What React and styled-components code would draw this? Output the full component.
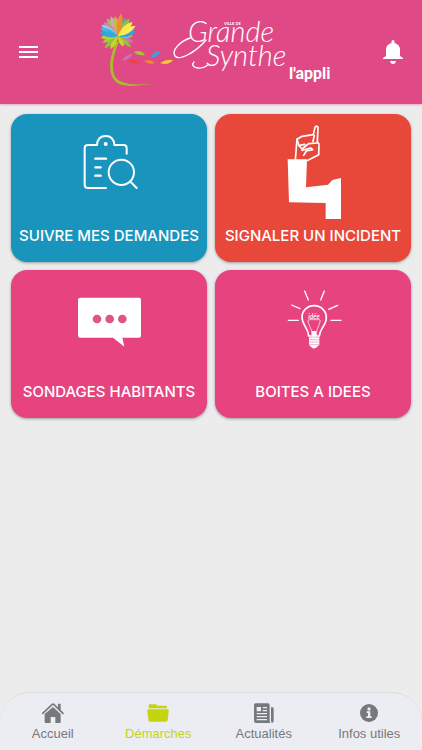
import React, { useState } from "react";
import styled, { createGlobalStyle } from "styled-components";

const pink = "#df4985";
const cardPink = "#e6437f";
const blue = "#1995bd";
const red = "#e8483a";
const lime = "#c3d50f";
const grey = "#77787c";
const sans = `"Liberation Sans", Arial, Helvetica, sans-serif`;

const GlobalStyle = createGlobalStyle`
  * { box-sizing: border-box; }
  body {
    margin: 0;
    background: #ececec;
    font-family: ${sans};
  }
`;

const Page = styled.div`
  min-height: 100vh;
  display: flex;
  flex-direction: column;
`;

const Header = styled.header`
  display: flex;
  align-items: center;
  justify-content: space-between;
  height: 104px;
  padding: 0 19px;
  background: ${pink};
  box-shadow: 0 1px 2px rgba(223, 73, 133, 0.4);
`;

const IconButton = styled.button`
  display: flex;
  padding: 0;
  border: 0;
  background: none;
  color: #fff;
  cursor: pointer;
`;

const LogoLink = styled.a`
  display: flex;
`;

const Main = styled.main`
  flex: 1;
  padding: 10px 11px;
`;

const Grid = styled.div`
  display: grid;
  grid-template-columns: 1fr 1fr;
  gap: 8px;
`;

const Card = styled.button`
  display: flex;
  flex-direction: column;
  align-items: center;
  gap: 6px;
  padding: 10px 0 16px;
  border: 0;
  border-radius: 16px;
  background: ${({ $color }) => $color};
  box-shadow: 0 1px 3px rgba(0, 0, 0, 0.35);
  color: #fff;
  font-family: Inter, ${sans};
  font-weight: 500;
  font-size: 15px;
  line-height: 20px;
  white-space: nowrap;
  cursor: pointer;
`;

const CardIcon = styled.svg`
  width: 96px;
  height: 96px;
`;

const TabBar = styled.nav`
  display: grid;
  grid-template-columns: repeat(4, 1fr);
  padding: 9px 0 8px;
  border-top: 1px solid #dcdde2;
  border-radius: 30px 30px 0 0;
  background: #ecedf3;
`;

const Tab = styled.a`
  display: flex;
  flex-direction: column;
  align-items: center;
  gap: 2px;
  color: ${({ $active }) => ($active ? lime : grey)};
  font-size: 13px;
  line-height: 16px;
  text-decoration: none;
`;

const TabIcon = styled.svg`
  width: 22px;
  height: 22px;
  fill: currentColor;
`;

// angle, length, half width, colour
const petals = [
  [-112, 17, 3, "#a9c938"],
  [-132, 18, 3, "#8cc63f"],
  [-150, 15, 3, "#c9d52b"],
  [112, 17, 3, "#c779b4"],
  [130, 17, 3, "#8cc63f"],
  [152, 12, 3, "#c9d52b"],
  [90, 15, 3, "#b5cf2c"],
  [-95, 17, 4, "#b5cf2c"],
  [-32, 21, 4, "#95c840"],
  [-20, 21, 4, "#c9a9c0"],
  [-8, 20, 4, "#c9b54c"],
  [22, 20, 4, "#4ba3d4"],
  [-46, 20, 4, "#d67fb0"],
  [33, 21, 4, "#8cc63f"],
  [8, 23, 4, "#f28b30"],
  [-56, 20, 4, "#8ccbe0"],
  [-66, 19, 4, "#4bb0dc"],
  [-80, 18, 4, "#2fa6dc"],
  [75, 18, 5, "#2fa6dc"],
  [60, 20, 4, "#f8f064"],
  [46, 20, 4, "#fbe94a"],
];

function Logo() {
  return (
    <svg width="245" height="88" viewBox="88 8 245 88" fill="none">
      <path
        d="M116 42C110 56 107 72 115 81C122 88 134 86 152 84C138 85 124 85 117 79C110 71 113 55 119 42Z"
        fill="#a9bd2c"
      />
      {petals.map(([angle, len, w, color]) => (
        <path
          key={angle}
          transform={`translate(118 36) rotate(${angle})`}
          d={`M0 0C${-w} ${-len * 0.4} ${-w * 0.8} ${-len * 0.8} 0 ${-len}C${w * 0.8} ${-len * 0.8} ${w} ${-len * 0.4} 0 0Z`}
          fill={color}
        />
      ))}
      <path d="M134 52Q141 49 145 55Q138 56 134 52Z" fill="#a6c62f" />
      <path d="M151 58Q153 50 161 51Q158 57 151 58Z" fill="#35a3dc" />
      <path d="M122 61Q125 54 133 54Q129 60 122 61Z" fill="#cc6eb0" />
      <path d="M127 60Q135 58 140 64Q132 64 127 60Z" fill="#e84545" />
      <path d="M144 61Q151 59 155 63Q149 65 144 61Z" fill="#f28b30" />
      <path d="M160 63Q166 59 173 60Q168 66 160 63Z" fill="#fbc834" />
      <g stroke="#fff" strokeWidth="1.4" strokeLinecap="round">
        <path d="M206 40C195 53 179 61 175 56C171 50 181 41 190 38" />
        <path d="M208 65C200 71 189 67 194 62" />
      </g>
      <g fill="#fff">
        <text x="224" y="25" fontFamily="Lato, sans-serif" fontWeight="700" fontSize="4">VILLE DE</text>
        <g fontFamily="Lato, sans-serif" fontStyle="italic" fontWeight="300">
          <text x="188" y="42" fontSize="29">Grande</text>
          <text x="206" y="66" fontSize="29">Synthe</text>
        </g>
        <text x="289" y="79" fontFamily="Roboto, sans-serif" fontWeight="700" fontSize="16">
          l'appli
        </text>
      </g>
    </svg>
  );
}

function RequestsIcon() {
  return (
    <CardIcon viewBox="183 72 288 288" fill="none" stroke="#fff" strokeWidth="6" strokeLinecap="round" strokeLinejoin="round">
      <path d="M318 264H264Q254 264 254 254V145Q254 135 264 135H291Q293 108 317 108Q341 108 343 135H371Q380 135 380 144V161" />
      <circle cx="317" cy="132" r="6" fill="#fff" stroke="none" />
      <path d="M286 176H318M286 202H302M286 227H302" strokeWidth="7" />
      <circle cx="364" cy="217" r="38" />
      <path d="M391 245L410 264" />
    </CardIcon>
  );
}

function IncidentIcon() {
  return (
    <CardIcon viewBox="165 72 288 288" fill="none" stroke="#fff" strokeWidth="5" strokeLinejoin="round" strokeLinecap="round">
      <path d="M233 178H291L288 262L354 254L367 240L393 234V357H347V309L237 307Z" fill="#fff" stroke="none" />
      <path d="M256 180L261 118L276 109L310 104L315 82Q319 75 324 82L322 125L327 132L326 164L291 182" />
      <path d="M261 118L267 137L284 133M313 107L309 124M267 137L276 147L296 131L322 129M276 151L303 144L308 149L289 153L281 166" />
    </CardIcon>
  );
}

function SurveyIcon() {
  return (
    <CardIcon viewBox="183 45 288 288" fill="#fff">
      <path d="M241 98H417Q423 98 423 104V212Q423 218 417 218H367L373 245L339 218H241Q234 218 234 212V104Q234 98 241 98Z" />
      <g fill="#df5480">
        <circle cx="291" cy="162" r="13" />
        <circle cx="329" cy="162" r="13" />
        <circle cx="367" cy="162" r="13" />
      </g>
    </CardIcon>
  );
}

function IdeaIcon() {
  return (
    <CardIcon viewBox="165 45 288 288" fill="none" stroke="#fff" strokeWidth="4" strokeLinecap="round">
      <path d="M284 78L295 105M343 78L332 105M245 120L270 131M383 121L356 133M235 166H265M363 166H393" />
      <path d="M296 213C295 187 276 181 276 157C276 136 293 122 312 122C333 122 349 137 349 158C349 181 330 189 328 213Z" strokeWidth="5" />
      <path d="M305 211V198L294 171Q292 164 299 164H327Q333 164 330 171L320 198V211" strokeWidth="2" />
      <path d="M306 198H319V214H306Z" fill="#fff" stroke="none" />
      <path d="M297 217H328V239Q324 243 320 247Q312 254 304 247Q300 243 297 239Z" fill="#fff" stroke="none" />
      <path d="M299 224H327M299 231H327M299 239H327" stroke="#ef8bb1" strokeWidth="2" />
      <text x="312" y="161" textAnchor="middle" fill="#fff" stroke="none" fontFamily="Lato, sans-serif" fontStyle="italic" fontSize="20">
        idée
      </text>
    </CardIcon>
  );
}

function HomeIcon() {
  return (
    <TabIcon viewBox="127 65 66 66">
      <path d="M160 80L183 101V125Q183 128 180 128H167V110H153V128H138Q135 128 135 125V101Z" />
      <path d="M129 99L157 73Q160 70 163 73L190 99" fill="none" stroke="currentColor" strokeWidth="5" strokeLinecap="round" />
      <path d="M175 70H183V91L175 84Z" />
    </TabIcon>
  );
}

function FolderIcon() {
  return (
    <TabIcon viewBox="442 66 66 66">
      <path d="M447 85V77Q447 73 451 73H467Q471 73 473 77H498Q502 77 502 81V85Z" />
      <path d="M447 88H503Q508 88 507 93L504 121Q503 125 499 125H451Q447 125 446 121L443 93Q442 88 447 88Z" />
    </TabIcon>
  );
}

function NewsIcon() {
  return (
    <TabIcon viewBox="126 65 66 66">
      <path
        fillRule="evenodd"
        d="M134 69H171Q176 69 176 74V123Q176 126 179 128H136Q129 128 129 121V74Q129 69 134 69ZM137 80V93H150V80ZM155 80V84H168V80ZM155 89V93H168V89ZM137 98V102H168V98ZM137 107V111H168V107ZM137 116V120H168V116Z"
      />
      <path d="M180 81H184Q188 81 188 85V122Q188 127 184 127Q180 127 180 122Z" />
    </TabIcon>
  );
}

function InfoIcon() {
  return (
    <TabIcon viewBox="440 66 66 66">
      <circle cx="473" cy="99" r="27" />
      <g fill="#ecedf3">
        <circle cx="473" cy="87" r="5" />
        <path d="M466 94H477V109H481V114H465V109H470V99H466Z" />
      </g>
    </TabIcon>
  );
}

const cards = [
  { label: "SUIVRE MES DEMANDES", color: blue, Icon: RequestsIcon },
  { label: "SIGNALER UN INCIDENT", color: red, Icon: IncidentIcon },
  { label: "SONDAGES HABITANTS", color: cardPink, Icon: SurveyIcon },
  { label: "BOITES A IDEES", color: cardPink, Icon: IdeaIcon },
];

const tabs = [
  { label: "Accueil", Icon: HomeIcon },
  { label: "Démarches", Icon: FolderIcon },
  { label: "Actualités", Icon: NewsIcon },
  { label: "Infos utiles", Icon: InfoIcon },
];

export default function App() {
  const [active, setActive] = useState("Démarches");

  return (
    <>
      <GlobalStyle />
      <Page>
        <Header>
          <IconButton aria-label="Menu">
            <svg width="19" height="12" viewBox="0 0 19 12" fill="currentColor">
              <path d="M0 0H19V2H0ZM0 5H19V7H0ZM0 10H19V12H0Z" />
            </svg>
          </IconButton>
          <LogoLink href="#accueil" aria-label="Grande Synthe l'appli">
            <Logo />
          </LogoLink>
          <IconButton aria-label="Notifications">
            <svg width="20" height="24" viewBox="0 0 20 24" fill="currentColor">
              <path d="M10 0Q11.500 0 11.500 1.500V3Q17 4.500 17 10V16L20 18V19H0V18L3 16V10Q3 4.500 8.500 3V1.500Q8.500 0 10 0ZM7 21H13Q12.500 24 10 24Q7.500 24 7 21Z" />
            </svg>
          </IconButton>
        </Header>
        <Main>
          <Grid>
            {cards.map(({ label, color, Icon }) => (
              <Card key={label} $color={color}>
                <Icon />
                {label}
              </Card>
            ))}
          </Grid>
        </Main>
        <TabBar>
          {tabs.map(({ label, Icon }) => (
            <Tab key={label} href="#" $active={active === label} onClick={() => setActive(label)}>
              <Icon />
              {label}
            </Tab>
          ))}
        </TabBar>
      </Page>
    </>
  );
}
